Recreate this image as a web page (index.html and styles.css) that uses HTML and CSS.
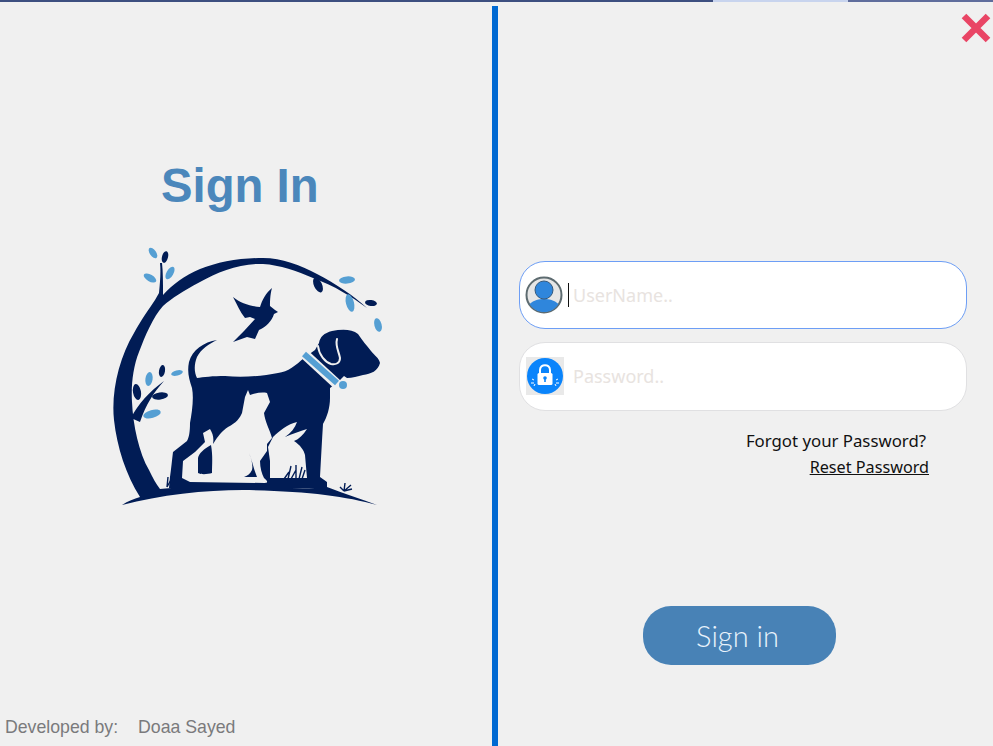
FILE: index.html
```html
<!DOCTYPE html>
<html lang="en">
<head>
<meta charset="utf-8">
<title>Sign In</title>
<link rel="stylesheet" href="styles.css">
</head>
<body>
<div class="strip"><span class="seg-dark"></span><span class="seg-light"></span><span class="seg-mid"></span></div>
<main class="main">
  <section class="left">
    <h1 class="title">Sign In</h1>
    <svg class="logo" viewBox="110 245 280 265" width="280" height="265" role="img" aria-label="Dog, cat, rabbit and bird logo">
      <!-- arc and ground -->
      <path class="navy" d="M122 505 C128 501 134 499 140 497 C126 475 117 447 114 420 C111 392 119 358 134 333 C141 320 149 309 155 300 L159 293 C160 283 161 272 160 263 L162 263 C163 272 163 283 163 295 C172 285 185 275 200 269 C218 262 240 258 263 258 C282 258 300 265 317 274 C336 284 354 296 367 308 C352 297 335 286 313 278 C297 271 280 265 263 264 C240 263 218 272 200 282 C183 291 172 298 163 306 C153 317 145 336 139 352 C133 367 131 385 132 402 C133 425 139 453 149 470 C153 478 156 484 160 489 C180 487 210 485 243 487 C275 487 305 490 327 487 C345 494 362 499 377 505 C345 496 305 491 243 490 C205 490 160 495 122 505Z"/>
      <!-- lower branch -->
      <path class="navy" d="M131 418 C138 404 150 391 164 381 C154 392 146 404 140 422Z"/>
      <!-- dog -->
      <path class="navy" d="M217 340 C204 342 192 350 189 362 C187 372 189 379 192 388 C194 398 192 412 190 423 C190 432 189 437 187 441 L173 452 C172 460 171 470 170 477 L169 488 L327 488 L327 482 L320 477 C321 458 322 440 323 424 C327 417 330 408 330 398 L330 388 L339 381 L344 376 L347 378 C352 378 358 376 363 375 C371 374 378 371 380 363 C379 358 375 356 371 351 C367 346 362 340 358 334 C352 329 342 329 332 331 C324 333 320 337 319 343 L315 350 L304 358 C296 365 288 372 278 373 C262 376 243 378 225 376 C213 376 203 377 197 378 C194 372 194 364 197 357 C201 349 209 344 217 340Z"/>
      <!-- cat -->
      <path class="paper" d="M245 397 L248 390 L250 395 C256 393 262 392 267 393 L270 402 L264 413 C265 422 270 430 272 438 L267 444 L267 451 L260 461 C260 468 262 474 264 478 C268 481 268 483 265 483 L190 482 L182 478 L183 461 L195 452 L205 442 L203 433 L210 429 C213 434 214 438 213 444 C218 436 222 431 228 427 C236 423 240 418 242 413 Z"/>
      <path class="navy" d="M211 445 C204 449 199 453 198 458 L198 473 C202 475 208 474 212 473 C212 465 213 456 211 445Z"/>
      <path class="navy" d="M249 453 C252 460 253 466 252 470 C250 474 247 476 244 477 L257 477 C254 470 252 460 249 453Z"/>
      <!-- rabbit -->
      <path class="paper" d="M268 447 L273 437 C279 431 288 424 297 422 C295 428 291 433 285 437 C292 434 300 431 307 429 C303 435 299 439 294 441 C300 445 304 450 305 455 L307 478 L270 478 L270 461 Z"/>
      <path class="grass" d="M284 479 L289 472 M288 479 L291 466 M291 479 L296 470 M296 479 L296 465 M299 479 L302 467 M302 479 L305 470"/>
      <path class="grass" d="M167 487 L168 477 M167 487 L172 478 M344 491 L345 483 M344 491 L351 485 M344 491 L352 489 M344 491 L340 487"/>
      <!-- bird -->
      <path class="navy" d="M233 297 C240 303 250 306 260 307 C262 300 266 293 272 288 C270 295 270 302 270 306 L275 310 L278 312 L274 314 C272 321 266 327 259 330 L255 339 L247 337 L233 342 L244 331 L255 319 L250 317 L245 318 C240 312 237 304 233 297Z"/>
      <!-- ear -->
      <path class="ear" d="M337 339 C335 346 339 352 340 358 C340 363 336 365 331 364 C325 362 319 355 318 346"/>
      <!-- collar -->
      <path class="collar-gap" d="M300 350 L339 386"/>
      <path class="collar" d="M304 354 L337 383"/>
      <circle class="blue" cx="343" cy="385" r="4"/>
      <!-- navy leaves -->
      <ellipse class="navy" cx="165" cy="257" rx="3" ry="6" transform="rotate(15 165 257)"/>
      <ellipse class="navy" cx="318" cy="285" rx="4" ry="8" transform="rotate(-25 318 285)"/>
      <ellipse class="navy" cx="371" cy="303" rx="6" ry="3" transform="rotate(8 371 303)"/>
      <ellipse class="navy" cx="137" cy="392" rx="4" ry="8" transform="rotate(-10 137 392)"/>
      <ellipse class="navy" cx="162" cy="371" rx="3" ry="6" transform="rotate(10 162 371)"/>
      <ellipse class="navy" cx="160" cy="396" rx="8" ry="3.500" transform="rotate(-8 160 396)"/>
      <!-- blue leaves -->
      <ellipse class="blue" cx="153" cy="253" rx="3.200" ry="6" transform="rotate(-35 153 253)"/>
      <ellipse class="blue" cx="150" cy="278" rx="3.400" ry="7" transform="rotate(-60 150 278)"/>
      <ellipse class="blue" cx="170" cy="273" rx="3.400" ry="7" transform="rotate(30 170 273)"/>
      <ellipse class="blue" cx="347" cy="280" rx="8" ry="3.600" transform="rotate(-5 347 280)"/>
      <ellipse class="blue" cx="350" cy="303" rx="4" ry="9" transform="rotate(-14 350 303)"/>
      <ellipse class="blue" cx="378" cy="325" rx="3.600" ry="7" transform="rotate(-15 378 325)"/>
      <ellipse class="blue" cx="149" cy="379" rx="3.600" ry="7" transform="rotate(8 149 379)"/>
      <ellipse class="blue" cx="177" cy="373" rx="6" ry="2.600" transform="rotate(-15 177 373)"/>
      <ellipse class="blue" cx="152" cy="414" rx="9" ry="4" transform="rotate(-15 152 414)"/>
    </svg>
    <footer class="credit"><span class="credit-label">Developed by:</span><span>Doaa Sayed</span></footer>
  </section>
  <div class="divider"></div>
  <section class="right">
    <svg class="close" viewBox="0 0 30 30" width="30" height="30" aria-label="Close"><path d="M3 3 L27 27 M27 3 L3 27"/></svg>
    <form class="form">
      <label class="field field-active">
        <svg class="icon" viewBox="0 0 38 38" width="38" height="38">
          <circle class="user-bg" cx="19" cy="19" r="17.500"/>
          <path class="user-blue" d="M4.500 28 C9 24 14 23 19 23 C24 23 29 24 33.500 28 C30 33.500 25 36 19 36 C13 36 8 33.500 4.500 28Z"/>
          <circle class="user-blue user-head" cx="19" cy="14" r="9"/>
        </svg>
        <span class="caret"></span>
        <input class="input" type="text" placeholder="UserName..">
      </label>
      <label class="field field-plain">
        <svg class="icon" viewBox="0 0 38 38" width="38" height="38">
          <rect class="lock-bg" width="38" height="38"/>
          <circle class="lock-disc" cx="19" cy="19" r="18"/>
          <path class="lock-shackle" d="M14 17 V13 C14 6.500 24 6.500 24 13 V17"/>
          <rect class="lock-body" x="11.500" y="16" width="15" height="12" rx="1.500"/>
          <circle class="lock-disc" cx="19" cy="21" r="1.800"/>
          <rect class="lock-disc" x="18.200" y="21" width="1.600" height="4"/>
          <path class="lock-spark" d="M6 22 L8 23 M5 26 L8 26 M8 29 L9 27 M32 22 L30 23 M33 26 L30 26 M30 29 L29 27"/>
        </svg>
        <input class="input input-plain" type="password" placeholder="Password..">
      </label>
      <div class="help">
        <p class="forgot">Forgot your Password?</p>
        <a class="reset" href="#">Reset Password</a>
      </div>
      <button class="submit" type="button">Sign in</button>
    </form>
  </section>
</main>
</body>
</html>
```
FILE: styles.css
```css
* { box-sizing: border-box; }
html, body { margin: 0; height: 100%; }
body {
  background: #f0f0f0;
  overflow: hidden;
  width: 993px;
  height: 746px;
}
.strip { display: flex; height: 2px; }
.seg-dark { width: 713px; background: #3d4f80; }
.seg-light { width: 135px; background: #c8d4ee; }
.seg-mid { flex: 1; background: #5f6d9c; }

.main { display: flex; height: 744px; }
.left {
  width: 492px;
  display: flex;
  flex-direction: column;
  align-items: flex-start;
}
.title {
  margin: 154px 0 0 161px;
  font: bold 47.300px/60px "Liberation Sans", Arial, sans-serif;
  color: #4b87bb;
}
.logo { display: block; margin: 29px 0 0 110px; }
.navy { fill: #011c55; }
.paper { fill: #f0f0f0; }
.blue { fill: #559fd3; }
.grass { fill: none; stroke: #011c55; stroke-width: 1.400; }
.ear { fill: none; stroke: #f0f0f0; stroke-width: 2; stroke-linecap: round; }
.collar-gap { fill: none; stroke: #f0f0f0; stroke-width: 10; }
.collar { fill: none; stroke: #559fd3; stroke-width: 6; }

.credit {
  margin: auto 0 8px 5px;
  display: flex;
  gap: 20px;
  font: 17.700px/22px "Liberation Sans", Arial, sans-serif;
  color: #7a7a7c;
}

.divider {
  width: 6px;
  margin-top: 4px;
  background: #0069d2;
}

.right { flex: 1; position: relative; }
.close {
  position: absolute;
  top: 11px;
  right: 2px;
  fill: none;
  stroke: #e94565;
  stroke-width: 6.500;
}
.form {
  display: flex;
  flex-direction: column;
  padding: 259px 0 0 21px;
  width: 469px;
}
.field {
  display: flex;
  align-items: center;
  height: 68px;
  background: #fff;
  border: 1px solid #e0e0e2;
  border-radius: 26px;
  padding-left: 5px;
  margin-bottom: 13px;
}
.field-active { border: 1.500px solid #6d9ef5; }
.field-plain { height: 69px; padding: 0 0 2px 6px; }
.icon { flex: none; display: block; }
.caret { width: 1px; height: 24px; margin-left: 5px; background: #111; flex: none; }
.input {
  flex: 1;
  min-width: 0;
  border: 0;
  outline: 0;
  padding: 0 0 0 4px;
  background: transparent;
  font: 18px "Noto Sans", "Open Sans", sans-serif;
  color: #333;
}
.input-plain { padding-left: 9px; }
.input::placeholder { color: #e8e3e0; opacity: 1; }
.user-bg { fill: #e6e6e6; stroke: #5d6b70; stroke-width: 2; }
.user-blue { fill: #2f86dc; }
.user-head { stroke: #34597d; stroke-width: 1; }
.lock-bg { fill: #e9e9e9; }
.lock-disc { fill: #0a84fb; }
.lock-shackle { fill: none; stroke: #fff; stroke-width: 2; }
.lock-body { fill: #fff; }
.lock-spark { fill: none; stroke: #fff; stroke-width: 1; }

.help {
  display: flex;
  flex-direction: column;
  align-items: flex-end;
  padding: 4px 38px 0 0;
  font: 16.200px/26px "Noto Sans", "Open Sans", sans-serif;
  color: #111;
}
.forgot { margin: 0 3px 0 0; font-size: 16.800px; }
.reset { color: #111; text-decoration: underline; }
.submit {
  align-self: flex-start;
  margin: 126px 0 0 124px;
  width: 193px;
  height: 59px;
  border: 0;
  border-radius: 28px;
  padding: 0 10px 0 6px;
  background: #4882b6;
  font: 300 29px Lato, "Open Sans", sans-serif;
  color: #e9f3fc;
}
```
